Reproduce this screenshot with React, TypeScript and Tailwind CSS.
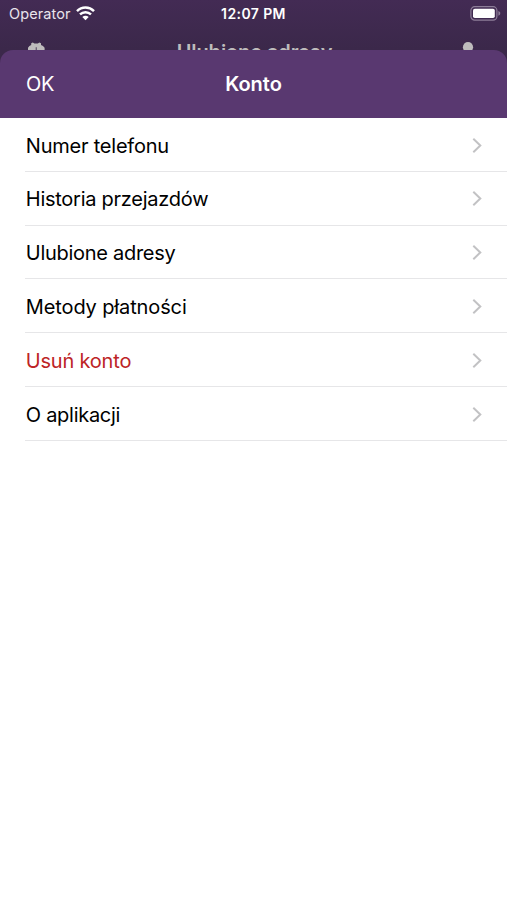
import React from 'react';

interface MenuItem {
  id: string;
  label: string;
  className: string;
}

const menuItems: MenuItem[] = [
  { id: 'phone', label: 'Numer telefonu', className: 'text-black tracking-[-0.22px]' },
  { id: 'history', label: 'Historia przejazdów', className: 'text-black tracking-[-0.26px]' },
  { id: 'addresses', label: 'Ulubione adresy', className: 'text-black tracking-[-0.28px]' },
  { id: 'payments', label: 'Metody płatności', className: 'text-black tracking-[-0.12px]' },
  { id: 'delete', label: 'Usuń konto', className: 'text-[#bd2426] tracking-[-0.2px]' },
  { id: 'about', label: 'O aplikacji', className: 'text-black tracking-[-0.28px]' },
];

const WifiIcon: React.FC = () => (
  <svg width="19" height="15" viewBox="0 0 19 15" fill="none" stroke="white" strokeWidth="2.5">
    <path d="M1 5.1C5.8 0.4 13.2 0.4 18 5.1" />
    <path d="M4 8.4C7.1 5.5 11.9 5.5 15 8.4" />
    <path d="M9.5 14.2L6.3 11C8.1 9.4 10.9 9.4 12.7 11Z" fill="white" stroke="none" />
  </svg>
);

const BatteryIcon: React.FC = () => (
  <svg width="31" height="15" viewBox="0 0 31 15" fill="none">
    <rect x="0.9" y="0.7" width="26" height="13.4" rx="3.8" stroke="#8d7d98" strokeWidth="1.2" />
    <rect x="3" y="2.8" width="21.8" height="9.2" rx="1.8" fill="white" />
    <path d="M28.4 5.1V9.7C30.9 8.8 30.9 6 28.4 5.1Z" fill="#8d7d98" />
  </svg>
);

const GearIcon: React.FC = () => (
  <svg width="18" height="18" viewBox="0 0 18 18" fill="#bebcbc">
    <path d="M5.8 0.4L7.4 1.5H10.8L12.4 0.4L14 1.2V3L16 4L17.6 5.8V12L14.2 14.3L11.8 17.5H6.2L3.8 14.3L1 12V5.8L2.4 4L4.2 3V1.2Z" />
    <path d="M8.6 5.2H10V9H8.6Z" fill="#6f6378" />
  </svg>
);

const PersonIcon: React.FC = () => (
  <svg width="20" height="20" viewBox="0 0 20 20" fill="#bebcbc">
    <circle cx="10" cy="5.2" r="5.1" />
    <path d="M1 20C1 14.5 4 12 10 12S19 14.5 19 20Z" />
  </svg>
);

const ChevronIcon: React.FC = () => (
  <svg width="10" height="16" viewBox="0 0 10 16" fill="none" stroke="#c2c2c4" strokeWidth="2">
    <path d="M1.3 0.8L8.3 7.5L1.3 14.2" />
  </svg>
);

const StatusBar: React.FC = () => (
  <div className="grid h-[27px] grid-cols-3 items-center pl-[9px] pr-[6px] text-white">
    <div className="flex items-center gap-[5px] text-[14.5px] tracking-[0.1px]">
      <span className="text-[#e9e4ec]">Operator</span>
      <WifiIcon />
    </div>
    <div className="-ml-[3px] text-center text-[14px] font-semibold tracking-[0.4px]">12:07 PM</div>
    <div className="flex justify-end">
      <BatteryIcon />
    </div>
  </div>
);

export default function App() {
  return (
    <div className="h-[900px] w-[507px] overflow-hidden bg-white font-['Inter','Liberation_Sans',sans-serif]">
      <div className="h-[70px] bg-linear-to-b from-[#432b54] to-[#3b284a] to-70%">
        <StatusBar />
        <div className="flex items-start justify-between pl-[27px] pr-[29px] pt-[15px]">
          <GearIcon />
          <span className="ml-[6px] text-[20px] leading-[21px] font-semibold tracking-[-0.1px] text-[#bebcbc]">
            Ulubione adresy
          </span>
          <PersonIcon />
        </div>
      </div>

      <div className="relative -mt-5 flex h-[850px] flex-col">
        <div className="grid h-[68px] shrink-0 grid-cols-3 items-center rounded-t-[13px] bg-[#593870] px-[26px] text-[20px] text-white">
          <span className="tracking-[-0.3px]">OK</span>
          <span className="text-center font-semibold">Konto</span>
        </div>

        <ul className="pl-[25px]">
          {menuItems.map((item) => (
            <li
              key={item.id}
              className="flex h-[53.8px] items-center justify-between border-b border-[#e6e6e8] pr-[25px] pl-[0.8px] pt-[2.6px]"
            >
              <span className={`text-[20px] ${item.className}`}>{item.label}</span>
              <ChevronIcon />
            </li>
          ))}
        </ul>
      </div>
    </div>
  );
}
